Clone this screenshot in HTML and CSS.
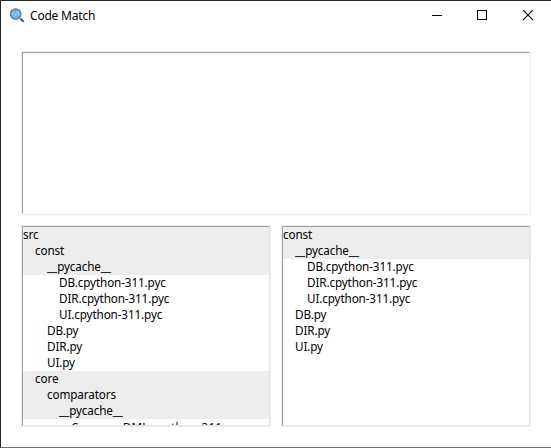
FILE: index.html
```html
<!DOCTYPE html>
<html lang="en">
<head>
<meta charset="utf-8">
<title>Code Match</title>
<link rel="stylesheet" href="styles.css">
</head>
<body>
<div class="window">
  <header class="titlebar">
    <svg class="app-icon" width="16" height="16" viewBox="0 0 16 16">
      <path d="M10.8 10.2l1.3 1.2" stroke="#777" stroke-width="1.2"/>
      <path d="M11.8 11l2.8 2.7" stroke="#48515a" stroke-width="2"/>
      <circle cx="6.7" cy="6" r="5.2" fill="#62b5f6" stroke="#68747e" stroke-width="1.3"/>
      <path d="M4.5 4.2L3 6 4.5 7.8M7.4 3.9L6 8.1M8.9 4.2L10.4 6 8.9 7.8" fill="none" stroke="#c5e6ff" stroke-width=".8"/>
    </svg>
    <h1 class="title">Code Match</h1>
    <div class="controls">
      <svg width="46" height="29" viewBox="0 0 46 29" shape-rendering="crispEdges"><path d="M19 14.5h10" stroke="#000"/></svg>
      <svg width="46" height="29" viewBox="0 0 46 29" shape-rendering="crispEdges"><path d="M18.5 9.5h9v9h-9z" fill="none" stroke="#000"/></svg>
      <svg width="46" height="29" viewBox="0 0 46 29"><path d="M18.2 9.2l9.6 9.6M27.8 9.2l-9.6 9.6" stroke="#000" stroke-width="1.1"/></svg>
    </div>
  </header>
  <main class="content">
    <section class="panel output"><div class="view"></div></section>
    <div class="trees">
      <section class="panel tree"><ul class="view">
        <li class="dir">src</li>
        <li class="dir l1">const</li>
        <li class="dir l2">__pycache__</li>
        <li class="l3">DB.cpython-311.pyc</li>
        <li class="l3">DIR.cpython-311.pyc</li>
        <li class="l3">UI.cpython-311.pyc</li>
        <li class="l2">DB.py</li>
        <li class="l2">DIR.py</li>
        <li class="l2">UI.py</li>
        <li class="dir l1">core</li>
        <li class="dir l2">comparators</li>
        <li class="dir l3">__pycache__</li>
        <li class="l4">CompareDML.cpython-311.pyc</li>
      </ul></section>
      <section class="panel tree"><ul class="view">
        <li class="dir">const</li>
        <li class="dir l1">__pycache__</li>
        <li class="l2">DB.cpython-311.pyc</li>
        <li class="l2">DIR.cpython-311.pyc</li>
        <li class="l2">UI.cpython-311.pyc</li>
        <li class="l1">DB.py</li>
        <li class="l1">DIR.py</li>
        <li class="l1">UI.py</li>
      </ul></section>
    </div>
  </main>
</div>
</body>
</html>
```

FILE: styles.css
```css
* { box-sizing: border-box; }
body {
  margin: 0;
  background: #fff;
  color: #000;
  font: 11.7px/16px "Noto Sans", "Open Sans", sans-serif;
}
.window {
  height: 448px;
  border: 1px solid #252525;
  border-right: 0;
  border-bottom-color: #707070;
  overflow: hidden;
}
.titlebar {
  display: flex;
  align-items: center;
  height: 29px;
  padding-left: 8px;
}
.app-icon { display: block; }
.title {
  margin: 0 0 0 5px;
  font-size: 12px;
  font-weight: 400;
  letter-spacing: -0.2px;
}
.controls {
  display: flex;
  margin-left: auto;
}
.content { padding: 21px 20px 0; }
.panel {
  border: 1px solid #ededed;
}
.view {
  height: 100%;
  margin: 0;
  padding: 0;
  list-style: none;
  overflow: hidden;
  border: 1px solid #e3e3e3;
  border-top-color: #a0a0a0;
  border-left-color: #a0a0a0;
}
.output { width: 510px; height: 164px; }
.output .view {
  border-right-color: #fff;
  border-bottom-color: #fff;
}
.trees {
  display: flex;
  gap: 10px;
  margin-top: 10px;
}
.tree { width: 250px; height: 202px; flex: none; }
.tree li {
  height: 16px;
  line-height: 14px;
  white-space: nowrap;
  letter-spacing: -0.12px;
}
.dir { background: #ededed; }
.l1 { padding-left: 12px; }
.l2 { padding-left: 24px; }
.l3 { padding-left: 36px; }
.tree .l4 {
  padding-left: 48px;
  line-height: 16px;
  letter-spacing: 0.2px;
}
```
